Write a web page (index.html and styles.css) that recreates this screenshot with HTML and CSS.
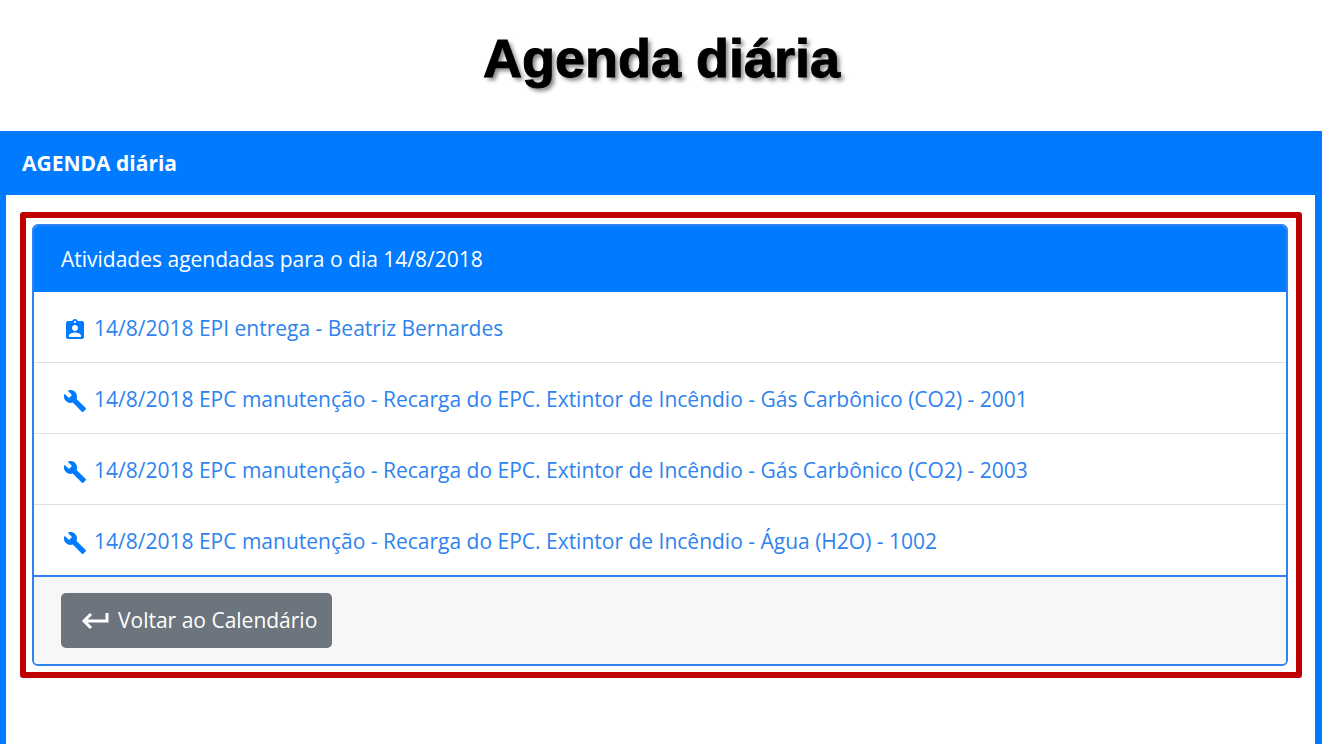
FILE: index.html
```
<!DOCTYPE html>
<html lang="pt-BR">
<head>
  <meta charset="UTF-8">
  <meta name="viewport" content="width=device-width, initial-scale=1.0">
  <title>Agenda diária</title>
  <link rel="stylesheet" href="styles.css">
</head>
<body>
  <svg class="sprite" aria-hidden="true">
    <symbol id="icon-wrench" viewBox="0 0 24 24">
      <path d="M22.7 19l-9.1-9.1c.9-2.3.4-5-1.5-6.9-2-2-5-2.4-7.4-1.3L9 6 6 9 1.6 4.7C.4 7.1.9 10.1 2.9 12.1c1.9 1.9 4.6 2.4 6.9 1.5l9.1 9.1c.4.4 1 .4 1.4 0l2.3-2.3c.5-.4.5-1.1.1-1.4z"/>
    </symbol>
  </svg>

  <h1 class="title">Agenda diária</h1>

  <main class="panel">
    <h2 class="panel-header">AGENDA diária</h2>
    <div class="panel-body">
      <div class="highlight">
        <section class="card">
          <h3 class="card-header">Atividades agendadas para o dia 14/8/2018</h3>
          <ul class="list">
            <li class="list-item">
              <a href="#">
                <svg class="icon" viewBox="0 0 24 24" aria-hidden="true"><path d="M19 3h-4.18C14.4 1.84 13.3 1 12 1c-1.3 0-2.4.84-2.82 2H5c-1.1 0-2 .9-2 2v14c0 1.1.9 2 2 2h14c1.1 0 2-.9 2-2V5c0-1.1-.9-2-2-2zm-7 0c.55 0 1 .45 1 1s-.45 1-1 1-1-.45-1-1 .45-1 1-1zm0 4c1.66 0 3 1.34 3 3s-1.34 3-3 3-3-1.34-3-3 1.34-3 3-3zm6 12H6v-1.4c0-2 4-3.1 6-3.1s6 1.1 6 3.1V19z"/></svg>
                <span>14/8/2018 EPI entrega - Beatriz Bernardes</span>
              </a>
            </li>
            <li class="list-item">
              <a href="#">
                <svg class="icon" aria-hidden="true"><use href="#icon-wrench"/></svg>
                <span>14/8/2018 EPC manutenção - Recarga do EPC. Extintor de Incêndio - Gás Carbônico (CO2) - 2001</span>
              </a>
            </li>
            <li class="list-item">
              <a href="#">
                <svg class="icon" aria-hidden="true"><use href="#icon-wrench"/></svg>
                <span>14/8/2018 EPC manutenção - Recarga do EPC. Extintor de Incêndio - Gás Carbônico (CO2) - 2003</span>
              </a>
            </li>
            <li class="list-item">
              <a href="#">
                <svg class="icon" aria-hidden="true"><use href="#icon-wrench"/></svg>
                <span>14/8/2018 EPC manutenção - Recarga do EPC. Extintor de Incêndio - Água (H2O) - 1002</span>
              </a>
            </li>
          </ul>
          <div class="card-footer">
            <button type="button" class="btn">
              <svg class="btn-icon" viewBox="0 0 28 20" aria-hidden="true"><path d="M26 3v8H3M10 4l-7 7 7 7"/></svg>
              <span>Voltar ao Calendário</span>
            </button>
          </div>
        </section>
      </div>
    </div>
  </main>
</body>
</html>
```

FILE: styles.css
```
:root {
  --primary: #007bff;
  --link: #2e83ee;
  --secondary: #6c757d;
  --highlight: #c00000;
}

* {
  box-sizing: border-box;
}

body {
  display: flex;
  flex-direction: column;
  min-height: 100vh;
  margin: 0;
  background: #fff;
  font-family: "Segoe UI", "Open Sans", "Noto Sans", sans-serif;
  font-size: 21px;
  line-height: 32px;
}

.sprite {
  display: none;
}

.title {
  margin: 0;
  padding: 24px 0 39px;
  font-family: "Arial Rounded MT Bold", "Liberation Sans", Arial, sans-serif;
  font-size: 54px;
  font-weight: bold;
  line-height: 68px;
  text-align: center;
  text-shadow: 3px 3px 4px rgba(0, 0, 0, 0.5);
  -webkit-text-stroke: 1px #000;
}

.panel {
  display: flex;
  flex: 1;
  flex-direction: column;
  margin-right: 1px;
  background: var(--primary);
}

.panel-header {
  margin: 0;
  padding: 16px 22px;
  color: #fff;
  font-size: 21px;
  font-weight: bold;
}

.panel-body {
  flex: 1;
  margin: 0 7px 0 6px;
  padding: 17px 13px 32px 14px;
  background: #fff;
}

.highlight {
  padding: 6px 8px 6px 6px;
  border: 6px solid var(--highlight);
  border-radius: 3px;
}

.card {
  overflow: hidden;
  border: 2px solid var(--link);
  border-radius: 6px;
}

.card-header {
  margin: -2px -2px 0;
  padding: 19px 29px 17px;
  background: var(--primary);
  color: #fff;
  font-size: 21px;
  font-weight: normal;
}

.list {
  margin: 0;
  padding: 0;
  list-style: none;
}

.list-item {
  padding: 20px 29px 18px;
  border-bottom: 1px solid #dfdfdf;
}

.list-item:last-child {
  border-bottom: 0;
}

.list-item a {
  display: flex;
  align-items: center;
  gap: 7px;
  color: var(--link);
  text-decoration: none;
}

.icon {
  flex: none;
  width: 24px;
  height: 24px;
  margin-top: 4px;
  fill: var(--primary);
}

.card-footer {
  padding: 16px 27px;
  border-top: 2px solid var(--link);
  background: #f7f7f7;
}

.btn {
  display: flex;
  align-items: center;
  gap: 9px;
  padding: 11px 15px 12px 20px;
  border: 0;
  border-radius: 5px;
  background: var(--secondary);
  color: #fff;
  font: inherit;
  cursor: pointer;
}

.btn-icon {
  width: 28px;
  height: 20px;
  fill: none;
  stroke: #fff;
  stroke-width: 3;
}
```
